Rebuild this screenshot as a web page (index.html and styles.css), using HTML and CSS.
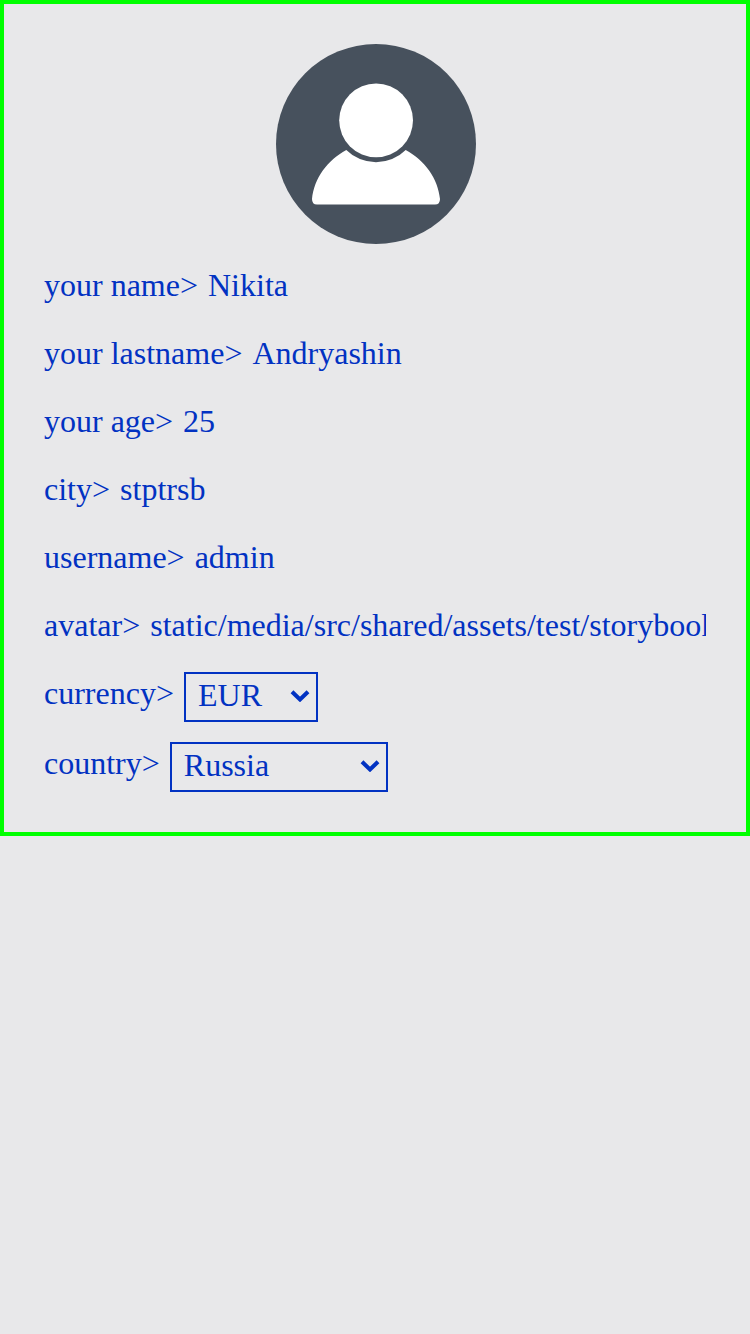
FILE: index.html
```html
<!DOCTYPE html>
<html lang="en">
<head>
<meta charset="utf-8">
<title>Profile</title>
<link rel="stylesheet" href="styles.css">
</head>
<body>
<main class="card">
  <div class="avatar">
    <svg viewBox="0 0 200 200" width="200" height="200" aria-label="avatar">
      <circle cx="100" cy="100" r="100" fill="#47515d"/>
      <circle cx="100.100" cy="76.300" r="36.900" fill="#fff"/>
      <path d="M70.300 106C51.500 116 38 134.500 36 155Q36 160.500 41 160.500H159Q164 160.500 164 155C162 134.500 148.500 116 129.700 106A42 42 0 0 1 70.300 106Z" fill="#fff"/>
    </svg>
  </div>
  <div class="row"><span>your name&gt;</span><span class="value">Nikita</span></div>
  <div class="row"><span>your lastname&gt;</span><span class="value">Andryashin</span></div>
  <div class="row"><span>your age&gt;</span><span class="value">25</span></div>
  <div class="row"><span>city&gt;</span><span class="value">stptrsb</span></div>
  <div class="row"><span>username&gt;</span><span class="value">admin</span></div>
  <div class="row"><span>avatar&gt;</span><span class="value">static/media/src/shared/assets/test/storybook</span></div>
  <div class="row select-row"><span>currency&gt;</span><div class="select currency"><span>EUR</span><svg class="arrow" viewBox="0 0 20 14" width="20" height="14"><path d="M2 3.700L10 11.500L18 3.700" fill="none" stroke="#0232c2" stroke-width="4"/></svg></div></div>
  <div class="row select-row"><span>country&gt;</span><div class="select country"><span>Russia</span><svg class="arrow" viewBox="0 0 20 14" width="20" height="14"><path d="M2 3.700L10 11.500L18 3.700" fill="none" stroke="#0232c2" stroke-width="4"/></svg></div></div>
</main>
</body>
</html>
```
FILE: styles.css
```css
* { box-sizing: border-box; }
body {
  margin: 0;
  min-height: 100vh;
  background: #e8e8ea;
  color: #0232c2;
  font: 32px/42px "Liberation Serif", "Times New Roman", serif;
}
.card {
  display: flex;
  flex-direction: column;
  gap: 20px;
  height: 836px;
  padding: 40px;
  border: 4px solid #0f0;
}
.avatar { display: flex; justify-content: center; height: 200px; padding-left: 2px; }
.avatar svg { display: block; flex: none; }
.row { display: flex; gap: 10px; height: 48px; white-space: nowrap; }
.value { flex: 1; min-width: 0; overflow: hidden; }
.select-row { height: 50px; }
.select {
  display: flex;
  align-items: center;
  justify-content: space-between;
  height: 50px;
  padding: 0 6px 4px 12px;
  border: 2px solid #0232c2;
}
.currency { width: 134px; }
.country { width: 218px; }
.arrow { display: block; }
```
